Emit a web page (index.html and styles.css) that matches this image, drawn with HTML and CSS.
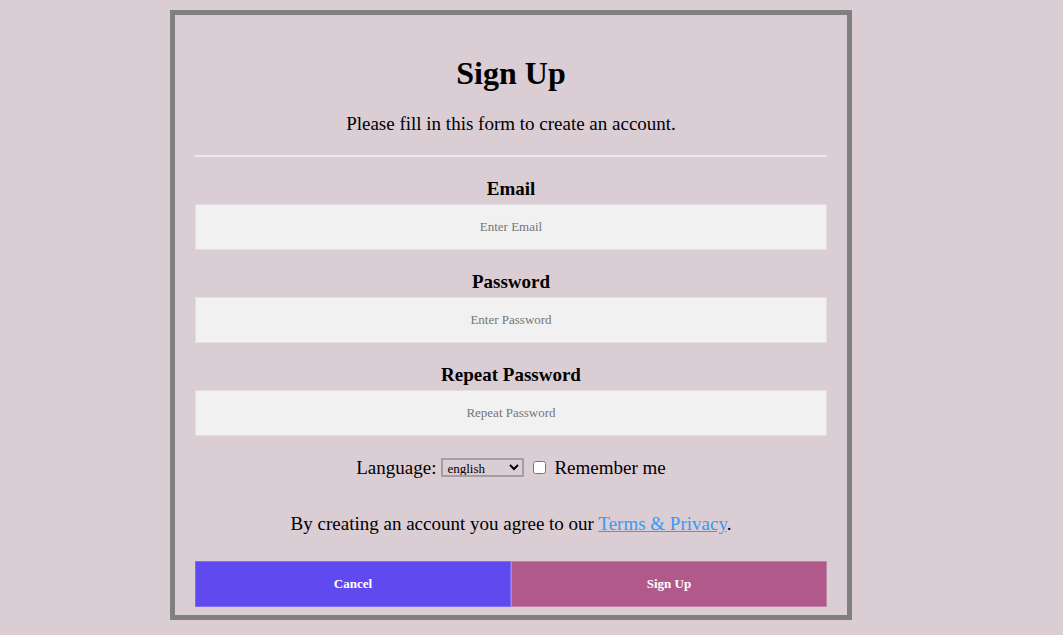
FILE: index.html
```html
<!DOCTYPE html>
<html>
<head>
<meta charset="utf-8">
<link rel="stylesheet" href="styles.css">
</head>
<body>
<form class="card">
  <h1 class="title">Sign Up</h1>
  <p class="lead">Please fill in this form to create an account.</p>
  <hr class="rule">
  <label class="field-label" for="email">Email</label>
  <input class="field" id="email" type="text" placeholder="Enter Email">
  <label class="field-label" for="psw">Password</label>
  <input class="field" id="psw" type="password" placeholder="Enter Password">
  <label class="field-label" for="psw2">Repeat Password</label>
  <input class="field" id="psw2" type="password" placeholder="Repeat Password">
  <div class="options">
    <span>Language:</span>
    <select class="lang"><option>english</option></select>
    <input class="check" type="checkbox">
    <span>Remember me</span>
  </div>
  <p class="terms">By creating an account you agree to our <a href="#" class="link">Terms &amp; Privacy</a>.</p>
  <div class="actions">
    <button type="button" class="btn btn-cancel">Cancel</button>
    <button type="button" class="btn btn-signup">Sign Up</button>
  </div>
</form>
</body>
</html>
```
FILE: styles.css
```css
html, body {
  margin: 0;
  padding: 0;
}
body {
  background: #dbcdd4;
  font-family: "Liberation Serif", "Times New Roman", serif;
  color: #000;
  padding-top: 10px;
}
.card {
  box-sizing: border-box;
  width: 682px;
  margin-left: 170px;
  border: 5px solid #808080;
  padding: 20px 20px 8px;
  display: flex;
  flex-direction: column;
  text-align: center;
}
.title {
  font-size: 32px;
  font-weight: bold;
  margin: 20px 0 0;
  line-height: 37px;
}
.lead {
  font-size: 19px;
  margin: 21px 0 0;
  line-height: 21px;
}
.rule {
  width: 100%;
  margin: 21px 0 0;
  border: 0;
  height: 2px;
  background: #efe9ec;
}
.field-label {
  font-size: 19px;
  font-weight: bold;
  line-height: 21px;
  margin-top: 21px;
}
.field {
  box-sizing: border-box;
  width: 100%;
  height: 46px;
  margin-top: 5px;
  border: 1px solid #e6dde2;
  background: #f1f1f1;
  text-align: center;
  font-family: "Liberation Serif", "Times New Roman", serif;
  font-size: 13px;
  outline: none;
}
.field::placeholder {
  color: #757575;
}
.field + .field-label {
  margin-top: 21px;
}
.options {
  margin-top: 21px;
  font-size: 19px;
  line-height: 21px;
  display: flex;
  justify-content: center;
  align-items: center;
}
.lang {
  font-family: "Liberation Serif", "Times New Roman", serif;
  font-size: 13px;
  width: 83px;
  height: 19px;
  margin-left: 5px;
  border: 2px solid #a39ea1;
  background: transparent;
  color: #000;
  padding: 0;
}
.check {
  margin: 0 8px 0 9px;
  width: 13px;
  height: 13px;
}
.terms {
  font-size: 19px;
  line-height: 21px;
  margin: 35px 0 0;
}
.link {
  color: #3a98f7;
}
.actions {
  margin-top: 27px;
  display: flex;
}
.btn {
  flex: 1;
  height: 46px;
  border: 1px solid #8c7fe0;
  color: #fff;
  font-family: "Liberation Serif", "Times New Roman", serif;
  font-size: 13px;
  font-weight: bold;
  cursor: pointer;
}
.btn-cancel {
  background: #6149f0;
  border-color: #7c6ef0;
}
.btn-signup {
  background: #b2598b;
  border-color: #c086a8;
}
```
